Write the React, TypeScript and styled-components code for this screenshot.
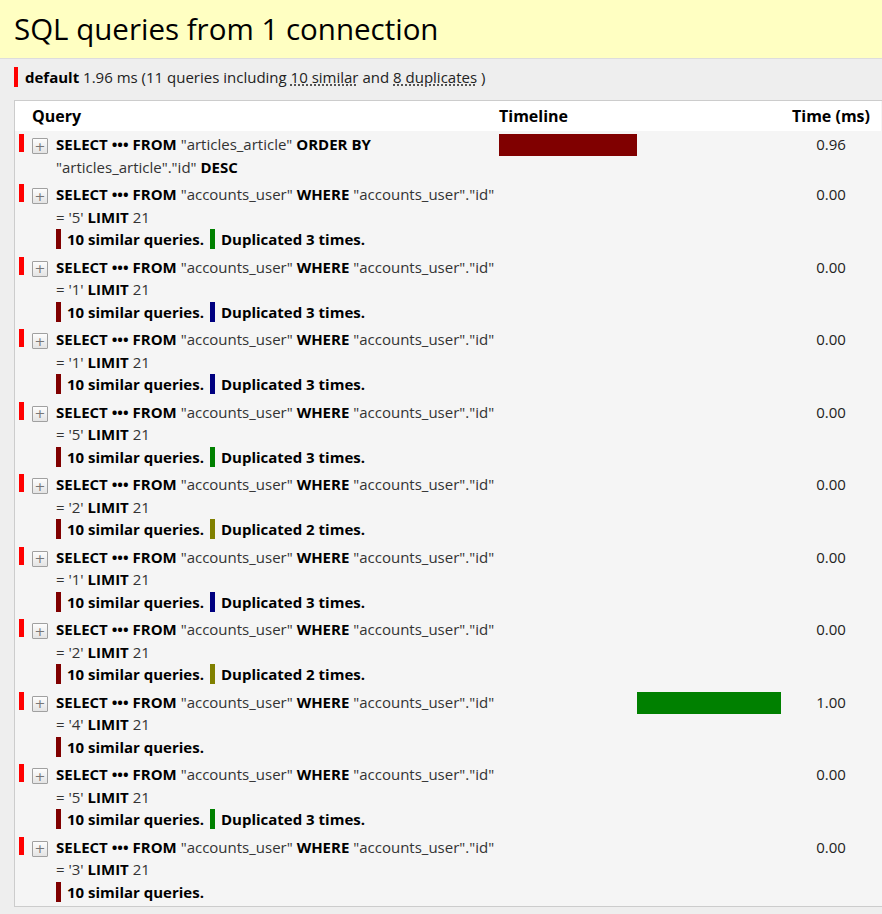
import React from 'react';
import styled, { createGlobalStyle } from 'styled-components';

const GlobalStyle = createGlobalStyle`
  html, body {
    margin: 0;
    padding: 0;
    background: #eeeeee;
    overflow: hidden;
  }
  body {
    font-family: "Open Sans", "Noto Sans CJK KR", sans-serif;
    color: #000;
  }
`;

interface QueryRow {
  table: string;
  where?: string;
  order?: boolean;
  start: number;
  duration: number;
  timelineColor: string;
  similar: boolean;
  dupTimes?: number;
  dupColor?: string;
}

const TOTAL = 1.96;

const rows: QueryRow[] = [
  { table: 'articles_article', order: true, start: 0, duration: 0.96, timelineColor: '#800000', similar: false },
  { table: 'accounts_user', where: '5', start: 0.96, duration: 0, timelineColor: '#008000', similar: true, dupTimes: 3, dupColor: '#008000' },
  { table: 'accounts_user', where: '1', start: 0.96, duration: 0, timelineColor: '#000080', similar: true, dupTimes: 3, dupColor: '#000080' },
  { table: 'accounts_user', where: '1', start: 0.96, duration: 0, timelineColor: '#000080', similar: true, dupTimes: 3, dupColor: '#000080' },
  { table: 'accounts_user', where: '5', start: 0.96, duration: 0, timelineColor: '#008000', similar: true, dupTimes: 3, dupColor: '#008000' },
  { table: 'accounts_user', where: '2', start: 0.96, duration: 0, timelineColor: '#808000', similar: true, dupTimes: 2, dupColor: '#808000' },
  { table: 'accounts_user', where: '1', start: 0.96, duration: 0, timelineColor: '#000080', similar: true, dupTimes: 3, dupColor: '#000080' },
  { table: 'accounts_user', where: '2', start: 0.96, duration: 0, timelineColor: '#808000', similar: true, dupTimes: 2, dupColor: '#808000' },
  { table: 'accounts_user', where: '4', start: 0.96, duration: 1.0, timelineColor: '#008000', similar: true },
  { table: 'accounts_user', where: '5', start: 1.96, duration: 0, timelineColor: '#008000', similar: true, dupTimes: 3, dupColor: '#008000' },
  { table: 'accounts_user', where: '3', start: 1.96, duration: 0, timelineColor: '#008000', similar: true },
];

const QueryText: React.FC<{ row: QueryRow }> = ({ row }) => (
  <Sql>
    <Kw>SELECT</Kw> <Kw>•••</Kw> <Kw>FROM</Kw> <Ident>"{row.table}"</Ident>{' '}
    {row.order ? (
      <>
        <Kw>ORDER BY</Kw> <Ident>"{row.table}"."id"</Ident> <Kw>DESC</Kw>
      </>
    ) : (
      <>
        <Kw>WHERE</Kw> <Ident>"{row.table}"."id"</Ident> <Ident>= '{row.where}'</Ident>{' '}
        <Kw>LIMIT</Kw> <Ident>21</Ident>
      </>
    )}
  </Sql>
);

const App: React.FC = () => {
  return (
    <>
      <GlobalStyle />
      <Header>
        <Title>SQL queries from 1 connection</Title>
      </Header>
      <Content>
        <Summary>
          <ColorMark color="#ff0000" />
          <strong>default</strong> 1.96 ms (11 queries including <Abbr>10 similar</Abbr> and{' '}
          <Abbr>8 duplicates</Abbr> )
        </Summary>
        <Table>
          <HeadCell />
          <HeadCell>Query</HeadCell>
          <HeadCell>Timeline</HeadCell>
          <HeadCell center>Time (ms)</HeadCell>
          {rows.map((row, i) => (
            <React.Fragment key={i}>
              <BarCell>
                <RowMark />
              </BarCell>
              <QueryCell>
                <Toggle>+</Toggle>
                <QueryBody>
                  <QueryText row={row} />
                  {row.similar && (
                    <Notes>
                      <Note>
                        <NoteMark color="#800000" />
                        10 similar queries.
                      </Note>
                      {row.dupTimes && (
                        <Note>
                          <NoteMark color={row.dupColor} />
                          Duplicated {row.dupTimes} times.
                        </Note>
                      )}
                    </Notes>
                  )}
                </QueryBody>
              </QueryCell>
              <TimelineCell>
                {row.duration > 0 && (
                  <Track>
                    <TimeBar
                      color={row.timelineColor}
                      style={{
                        marginLeft: `${(row.start / TOTAL) * 100}%`,
                        width: `${(row.duration / TOTAL) * 100}%`,
                      }}
                    />
                  </Track>
                )}
              </TimelineCell>
              <TimeCell>{row.duration.toFixed(2)}</TimeCell>
            </React.Fragment>
          ))}
        </Table>
      </Content>
    </>
  );
};

const Header = styled.div`
  background: #ffffc2;
  height: 58px;
  border-bottom: 1px solid #dddddd;
  display: flex;
  align-items: center;
  padding: 0 14px;
`;

const Title = styled.h3`
  margin: 0;
  font-size: 29.5px;
  font-weight: 400;
  color: #000;
  line-height: 1;
`;

const Content = styled.div`
  padding: 8px 0 0 14px;
`;

const Summary = styled.div`
  font-size: 15px;
  line-height: 20px;
  height: 20px;
  color: #222;
  margin-bottom: 13px;
  white-space: nowrap;
  strong {
    color: #000;
  }
`;

const ColorMark = styled.span<{ color: string }>`
  display: inline-block;
  vertical-align: top;
  width: 4px;
  height: 20px;
  background: ${({ color }) => color};
  margin-right: 7px;
`;

const Abbr = styled.abbr`
  text-decoration: underline dotted;
  text-underline-offset: 2px;
`;

const Table = styled.div`
  display: grid;
  grid-template-columns: 13px 467px 286px 100px;
  width: 900px;
  background: #f5f5f5;
  border: 1px solid #cccccc;
`;

const HeadCell = styled.div<{ center?: boolean }>`
  background: #ffffff;
  height: 30px;
  padding: 0 4px;
  font-size: 16px;
  font-weight: 700;
  line-height: 30px;
  text-align: ${({ center }) => (center ? 'center' : 'left')};
  white-space: nowrap;
`;

const BarCell = styled.div`
  padding: 3px 0 3px 4px;
`;

const RowMark = styled.span`
  display: block;
  width: 5px;
  height: 18px;
  background: #ff0000;
`;

const QueryCell = styled.div`
  display: flex;
  align-items: flex-start;
  gap: 8px;
  padding: 2px 0 3px 4px;
`;

const Toggle = styled.button`
  flex: none;
  width: 16px;
  height: 16px;
  margin-top: 5px;
  padding: 0;
  border: 1px solid #a0a0a0;
  border-radius: 1px;
  background: linear-gradient(#fdfdfd, #e4e4e4);
  color: #777;
  font-family: "DejaVu Sans", sans-serif;
  font-size: 13px;
  line-height: 13px;
  display: flex;
  align-items: center;
  justify-content: center;
`;

const QueryBody = styled.div`
  font-size: 15px;
  line-height: 22.5px;
`;

const Sql = styled.div`
  color: #333;
`;

const Kw = styled.b`
  color: #000;
  font-weight: 700;
`;

const Ident = styled.span`
  color: #333;
`;

const Notes = styled.div`
  display: flex;
  align-items: center;
  gap: 6px;
  height: 22.5px;
  font-weight: 700;
  color: #000;
`;

const Note = styled.span`
  display: inline-flex;
  align-items: center;
`;

const NoteMark = styled.span<{ color?: string }>`
  display: inline-block;
  width: 5px;
  height: 20px;
  margin-right: 6px;
  background: ${({ color }) => color};
`;

const TimelineCell = styled.div`
  padding: 3px 0 3px 4px;
`;

const Track = styled.div`
  display: flex;
  height: 22px;
`;

const TimeBar = styled.div<{ color: string }>`
  height: 22px;
  background: ${({ color }) => color};
`;

const TimeCell = styled.div`
  padding: 2px 4px;
  font-size: 15px;
  line-height: 22.5px;
  text-align: center;
  color: #222;
`;

export default App;
